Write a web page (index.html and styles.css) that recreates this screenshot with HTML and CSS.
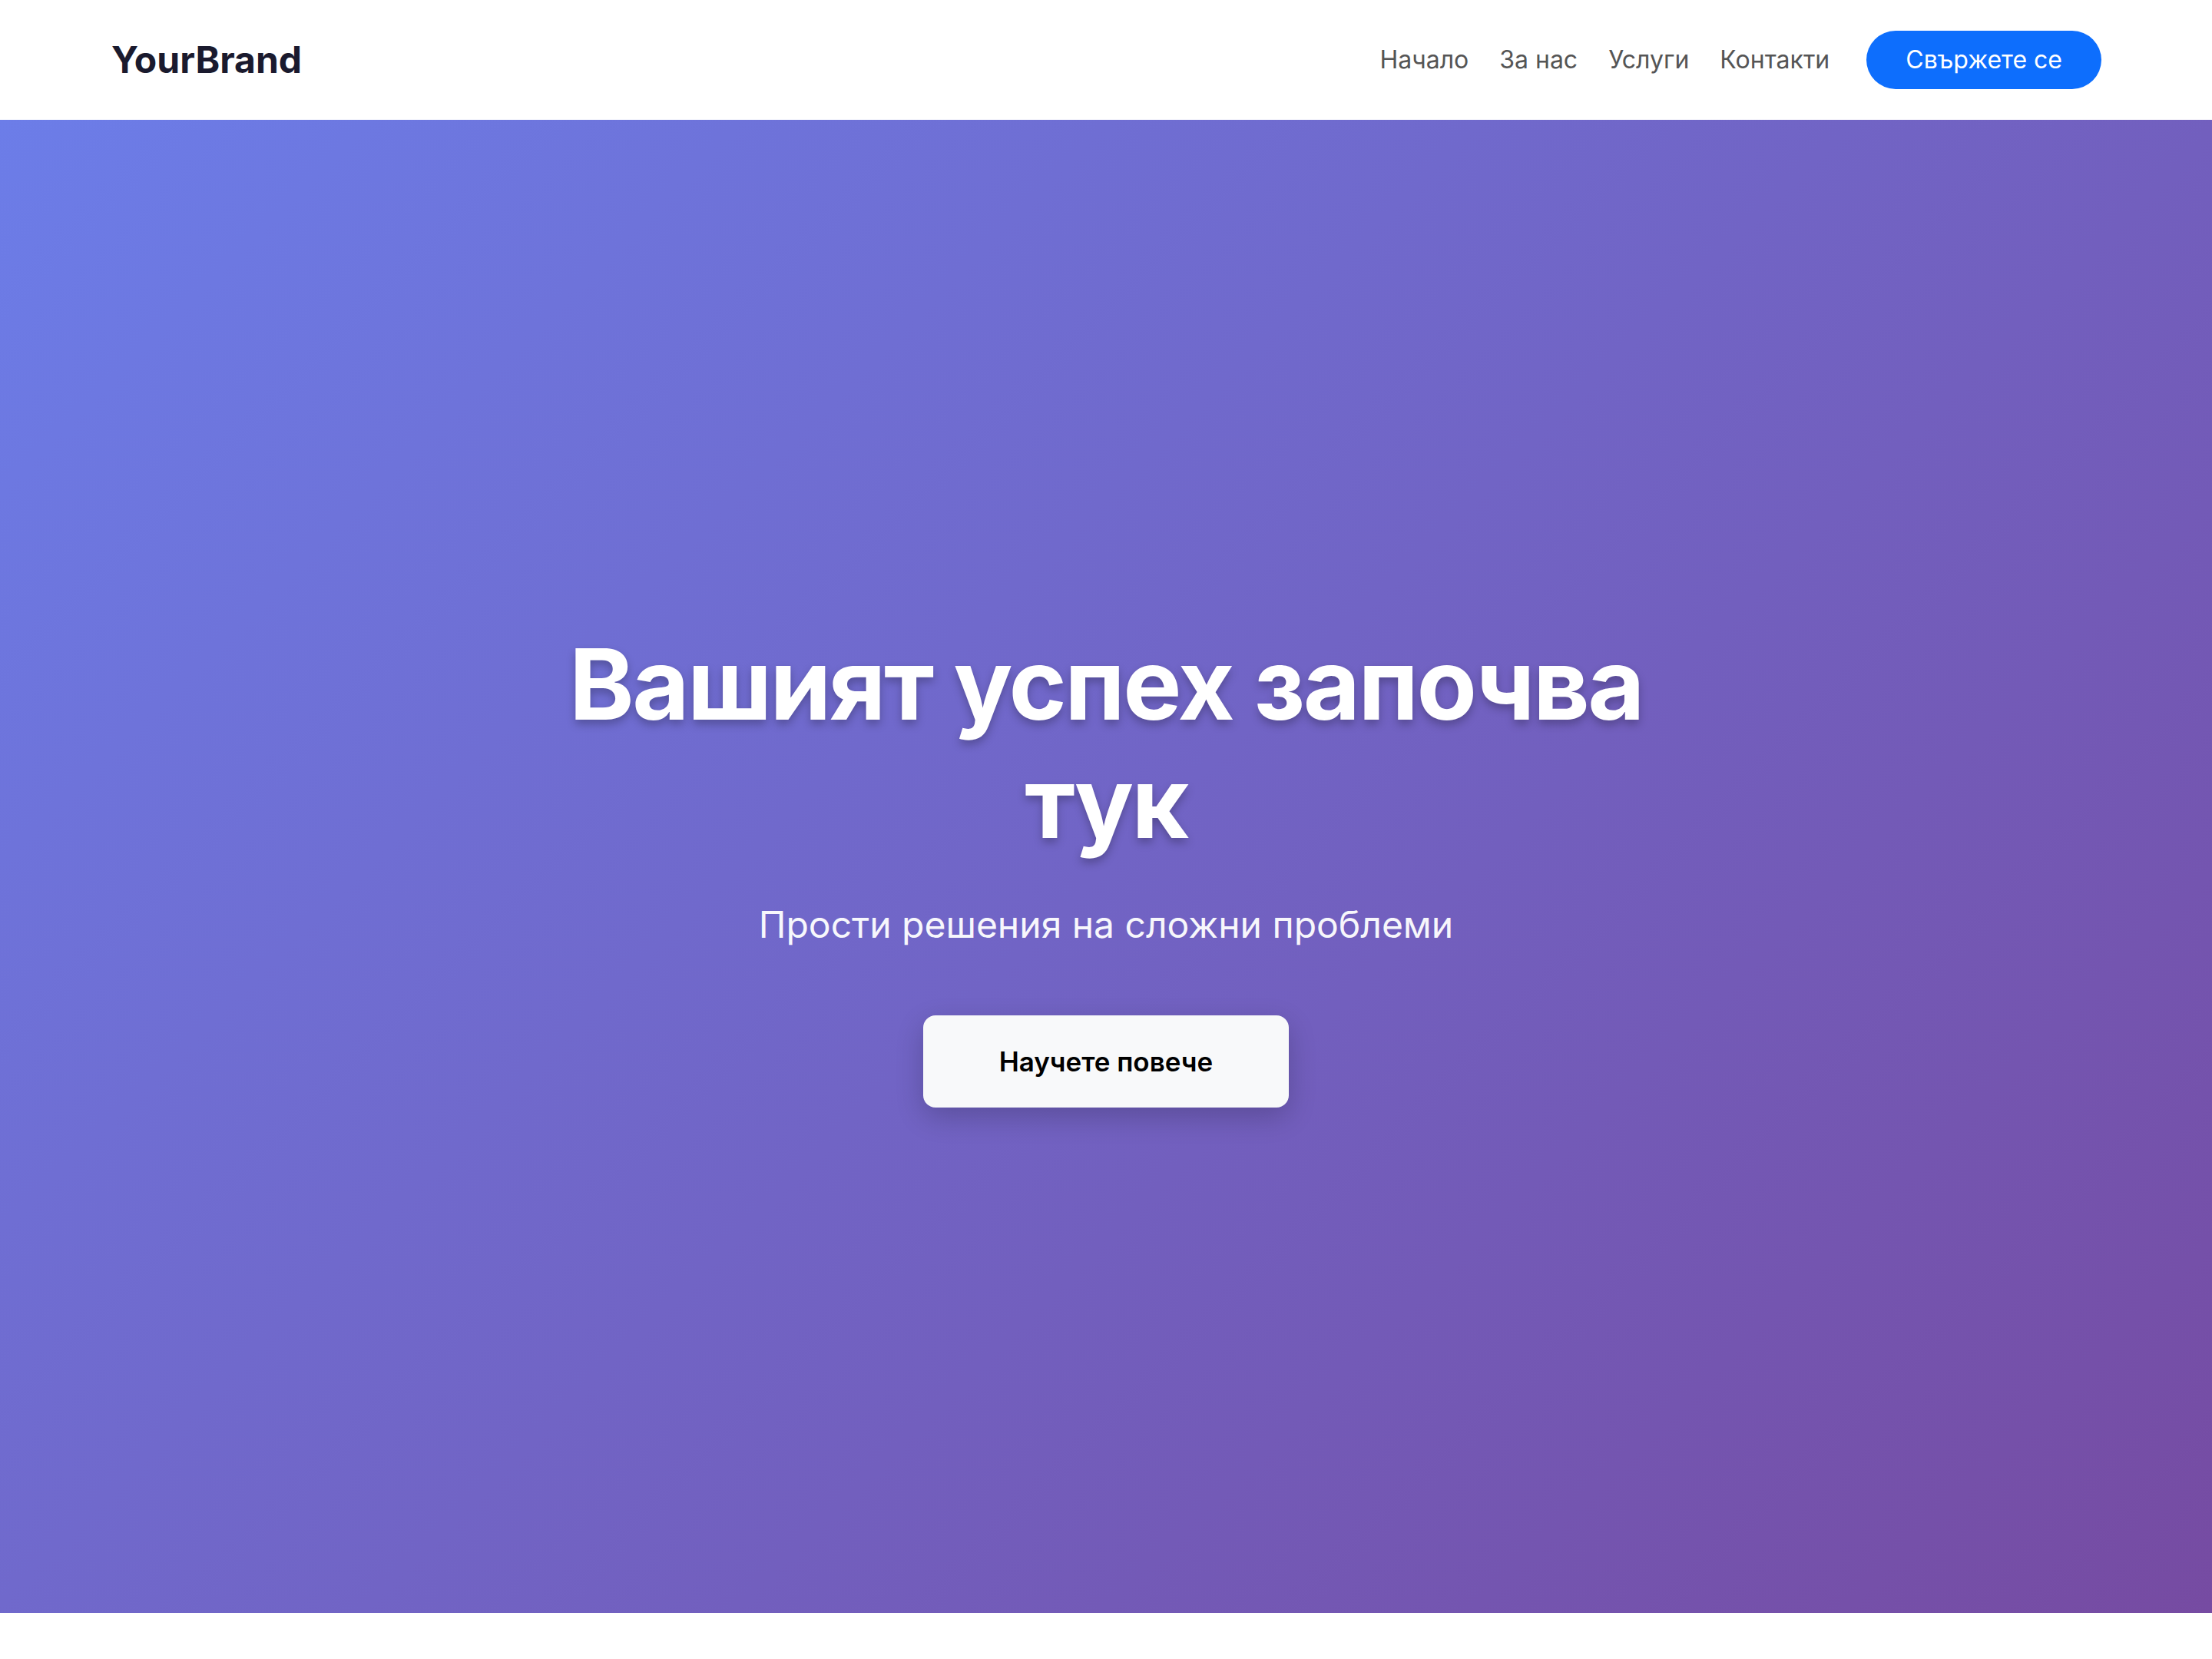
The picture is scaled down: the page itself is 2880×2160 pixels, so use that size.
FILE: index.html
```html
<!DOCTYPE html>
<html lang="bg">
<head>
<meta charset="utf-8">
<title>YourBrand</title>
<link rel="stylesheet" href="styles.css">
</head>
<body>
<header class="navbar">
  <a class="brand" href="#">YourBrand</a>
  <nav class="nav">
    <a class="nav-link" href="#">Начало</a>
    <a class="nav-link" href="#">За нас</a>
    <a class="nav-link" href="#">Услуги</a>
    <a class="nav-link" href="#">Контакти</a>
    <a class="nav-cta" href="#">Свържете се</a>
  </nav>
</header>
<section class="hero">
  <div class="hero-content">
    <h1 class="hero-title">Вашият успех започва тук</h1>
    <p class="hero-sub">Прости решения на сложни проблеми</p>
    <a class="hero-btn" href="#">Научете повече</a>
  </div>
</section>
</body>
</html>
```
FILE: styles.css
```css
* { box-sizing: border-box; }
html, body { margin: 0; padding: 0; }
body {
  font-family: "Inter", "Noto Sans", sans-serif;
  background: #ffffff;
  color: #212529;
}
a { text-decoration: none; }

.navbar {
  height: 156px;
  padding: 0 144px 0 145px;
  display: flex;
  align-items: center;
  justify-content: space-between;
  background: #ffffff;
}
.brand {
  font-size: 48px;
  font-weight: 700;
  color: #1a1a2e;
  line-height: 1;
}
.nav {
  display: flex;
  align-items: center;
  gap: 40px;
}
.nav-link {
  font-size: 32px;
  color: #555555;
  line-height: 1.5;
}
.nav-cta {
  margin-left: 8px;
  font-size: 32px;
  line-height: 48px;
  padding: 14px 51px;
  background: #0d6efd;
  color: #ffffff;
  border-radius: 40px;
}

.hero {
  height: 1944px;
  background: linear-gradient(135deg, #6c7de8 0%, #764ba2 100%);
  display: flex;
  align-items: center;
  justify-content: center;
  text-align: center;
  color: #ffffff;
}
.hero-content {
  display: flex;
  flex-direction: column;
  align-items: center;
}
.hero-title {
  margin: 0 0 47px;
  max-width: 1500px;
  font-size: 128px;
  font-weight: 700;
  line-height: 1.2;
  letter-spacing: -0.02em;
  text-shadow: 0 6px 12px rgba(0, 0, 0, 0.25);
}
.hero-sub {
  margin: 0 0 82px;
  font-size: 48px;
  line-height: 72px;
  opacity: 0.95;
}
.hero-btn {
  display: inline-block;
  font-size: 35px;
  font-weight: 600;
  line-height: 54px;
  padding: 33px 99px;
  background: #f8f9fa;
  color: #000000;
  border-radius: 16px;
  box-shadow: 0 12px 36px rgba(0, 0, 0, 0.2);
}
```
